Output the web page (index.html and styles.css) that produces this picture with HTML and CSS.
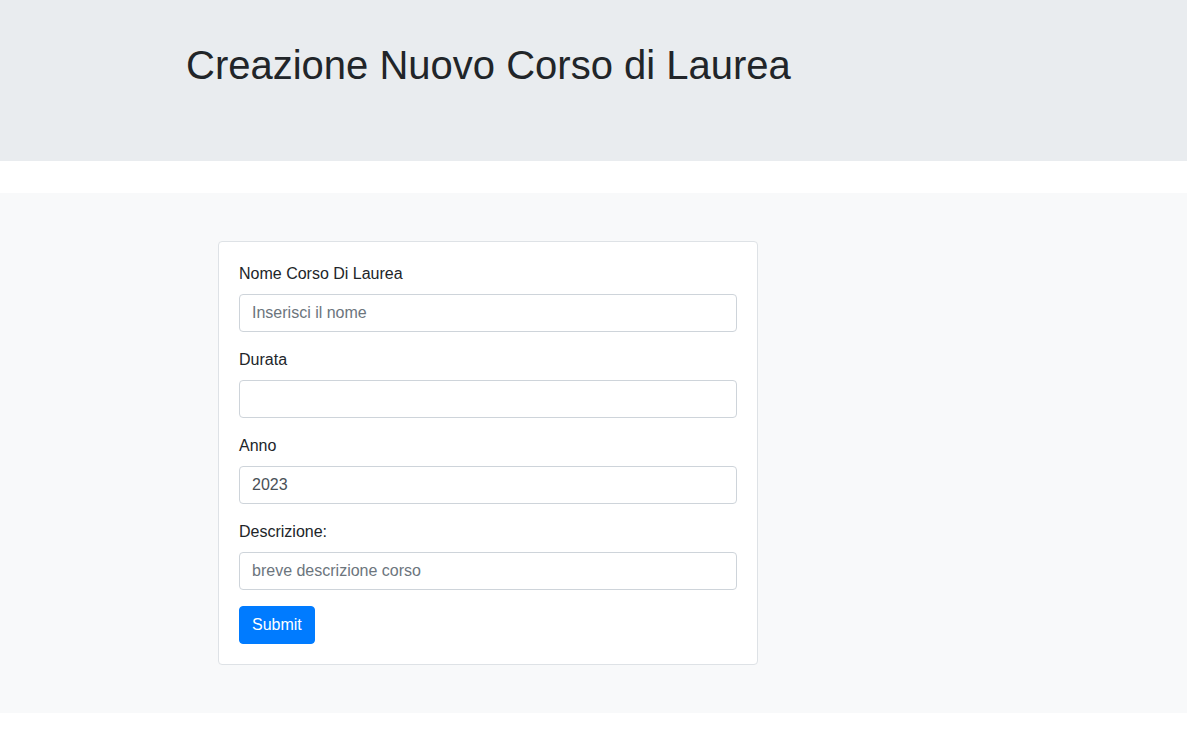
FILE: index.html
```html
<!DOCTYPE html>
<html lang="it">
<head>
<meta charset="utf-8">
<title>Creazione Nuovo Corso di Laurea</title>
<link rel="stylesheet" href="styles.css">
</head>
<body>
<header class="jumbotron">
  <h1 class="title">Creazione Nuovo Corso di Laurea</h1>
</header>
<section class="content">
  <form class="card">
    <div class="form-group">
      <label class="label" for="nome">Nome Corso Di Laurea</label>
      <input class="input" id="nome" type="text" placeholder="Inserisci il nome">
    </div>
    <div class="form-group">
      <label class="label" for="durata">Durata</label>
      <input class="input" id="durata" type="text">
    </div>
    <div class="form-group">
      <label class="label" for="anno">Anno</label>
      <input class="input" id="anno" type="text" value="2023">
    </div>
    <div class="form-group">
      <label class="label" for="desc">Descrizione:</label>
      <input class="input" id="desc" type="text" placeholder="breve descrizione corso">
    </div>
    <button class="btn" type="button">Submit</button>
  </form>
</section>
</body>
</html>
```

FILE: styles.css
```css
* { box-sizing: border-box; }
html, body { margin: 0; padding: 0; }
body {
  font-family: "Liberation Sans", Arial, sans-serif;
  font-size: 16px;
  line-height: 1.5;
  color: #212529;
  background: #fff;
}
.jumbotron {
  background: #e9ecef;
  height: 161px;
  padding: 41px 0 0 186px;
  margin-bottom: 32px;
}
.title {
  margin: 0;
  font-size: 40px;
  font-weight: 400;
  line-height: 48px;
}
.content {
  background: #f8f9fa;
  padding: 48px 0 48px 218px;
}
.card {
  width: 540px;
  background: #fff;
  border: 1px solid #dee2e6;
  border-radius: 4px;
  padding: 20px;
  display: flex;
  flex-direction: column;
  align-items: flex-start;
}
.form-group {
  width: 100%;
  margin-bottom: 16px;
  display: flex;
  flex-direction: column;
}
.label {
  display: block;
  margin-bottom: 8px;
  line-height: 24px;
}
.input {
  display: block;
  width: 100%;
  height: 38px;
  padding: 6px 12px;
  font-family: inherit;
  font-size: 16px;
  line-height: 24px;
  color: #495057;
  background: #fff;
  border: 1px solid #ced4da;
  border-radius: 4px;
  outline: none;
}
.input::placeholder { color: #6c757d; opacity: 1; }
.btn {
  height: 38px;
  padding: 6px 12px;
  font-family: inherit;
  font-size: 16px;
  line-height: 24px;
  color: #fff;
  background: #007bff;
  border: 1px solid #007bff;
  border-radius: 4px;
  cursor: pointer;
}
```
